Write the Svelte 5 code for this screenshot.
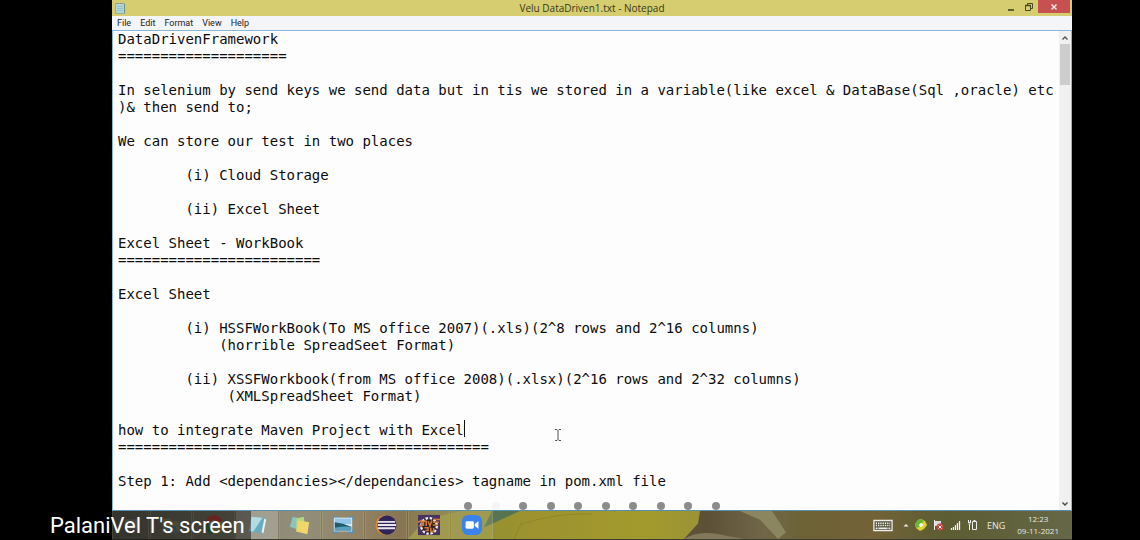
<script>
  const lines = [
    'DataDrivenFramework',
    '='.repeat(20),
    '',
    'In selenium by send keys we send data but in tis we stored in a variable(like excel & DataBase(Sql ,oracle) etc',
    ')& then send to;',
    '',
    'We can store our test in two places',
    '',
    '        (i) Cloud Storage',
    '',
    '        (ii) Excel Sheet',
    '',
    'Excel Sheet - WorkBook',
    '='.repeat(24),
    '',
    'Excel Sheet',
    '',
    '        (i) HSSFWorkBook(To MS office 2007)(.xls)(2^8 rows and 2^16 columns)',
    '            (horrible SpreadSeet Format)',
    '',
    '        (ii) XSSFWorkbook(from MS office 2008)(.xlsx)(2^16 rows and 2^32 columns)',
    '             (XMLSpreadSheet Format)',
    '',
    'how to integrate Maven Project with Excel',
    '='.repeat(44),
    '',
    'Step 1: Add <dependancies></dependancies> tagname in pom.xml file'
  ];
  let text = $state(lines.join('\n'));
  const menus = ['File', 'Edit', 'Format', 'View', 'Help'];
  const dots = Array.from({ length: 10 }, (_, i) => i);
</script>

<main class="share">
  <div class="desktop">
    <header class="titlebar">
      <svg class="app-icon" viewBox="0 0 12 12" aria-hidden="true">
        <path d="M1.500 1.500h9v10h-9z" fill="#b4d6d4" stroke="#93b09a" />
        <path d="M3 4.500h6M3 6.500h6M3 8.500h6" stroke="#8fc3d0" />
        <path d="M2 1.500h8" stroke="#81937b" stroke-dasharray="1 1" />
        <path d="M10.500 2v9" stroke="#6f8f80" />
      </svg>
      <h1>Velu DataDriven1.txt - Notepad</h1>
      <div class="controls">
        <button aria-label="Minimize"><svg viewBox="0 0 10 10"><path d="M2 8h6" stroke="#393818" stroke-width="1.500" /></svg></button>
        <button aria-label="Restore"><svg viewBox="0 0 10 10"><path d="M3.500 3V1.500h5v5H7" fill="none" stroke="#4a4821" /><path d="M1.500 3.500h5v5h-5z" fill="none" stroke="#4a4821" /><path d="M1 3.500h6" stroke="#4a4821" stroke-width="1.500" /></svg></button>
        <button class="close" aria-label="Close"><svg viewBox="0 0 10 10"><path d="M2.500 2.500l5 5m0-5l-5 5" stroke="#f6e6e4" stroke-width="1.500" /></svg></button>
      </div>
    </header>

    <nav class="menubar" aria-label="Menu">
      {#each menus as m}<button>{m}</button>{/each}
    </nav>

    <section class="editor">
      <textarea aria-label="Document text" spellcheck="false" wrap="off" rows="28" bind:value={text}></textarea>
      <div class="scrollbar">
        <button aria-label="Scroll up"><svg viewBox="0 0 8 8"><path d="M1.500 5.500L4 3l2.500 2.500" fill="none" stroke="#555" stroke-width="1.400" /></svg></button>
        <div class="thumb"></div>
        <button class="down" aria-label="Scroll down"><svg viewBox="0 0 8 8"><path d="M1.500 2.500L4 5l2.500-2.500" fill="none" stroke="#444" stroke-width="1.400" /></svg></button>
      </div>
      <span class="caret"></span>
      <svg class="ibeam" viewBox="0 0 8 12" aria-hidden="true"><path d="M1 .5h2l1 1 1-1h2M4 1.500v9M1 11.500h2l1-1 1 1h2" fill="none" stroke="#555" /></svg>
      <div class="pager">
        {#each dots as d}<span class:current={d === 1}></span>{/each}
      </div>
    </section>

    <footer class="taskbar">
      <svg class="wallpaper" viewBox="0 0 960 29" preserveAspectRatio="none" aria-hidden="true">
        <defs>
          <linearGradient id="base">
            <stop offset="0" stop-color="#5d5c50" /><stop offset=".14" stop-color="#7c7a68" />
            <stop offset=".2" stop-color="#85806a" /><stop offset=".26" stop-color="#857452" />
            <stop offset=".3" stop-color="#7a643c" /><stop offset=".37" stop-color="#8a8446" />
            <stop offset=".4" stop-color="#5f6840" /><stop offset=".62" stop-color="#5d5038" />
            <stop offset=".68" stop-color="#716748" /><stop offset=".72" stop-color="#6c6236" />
            <stop offset=".79" stop-color="#746238" /><stop offset=".87" stop-color="#5c5d33" />
            <stop offset="1" stop-color="#656747" />
          </linearGradient>
          <linearGradient id="petal">
            <stop offset="0" stop-color="#929033" /><stop offset=".25" stop-color="#9d922f" />
            <stop offset=".75" stop-color="#a39a2d" /><stop offset="1" stop-color="#9b9336" />
          </linearGradient>
        </defs>
        <path d="M0 0h960v29H0z" fill="url(#base)" />
        <path d="M296 29L314 8 350 0h38l20 0-30 29z" fill="#958d3b" />
        <path d="M380 0h28l-20 12-16 5z" fill="#55744f" />
        <path d="M362 29l12-13 34-16h180l-2 13-14 16z" fill="url(#petal)" />
        <path d="M408 14q34-12 72-11M402 29l8-18" fill="none" stroke="#8e8729" />
        <path d="M628 0h32l14 22-8 7-18-20z" fill="#8b8660" />
        <path d="M572 29q14-10 40-4l20 4z" fill="#817959" />
      </svg>
      <div class="apps">
        <button class="start" aria-label="Desktop"><svg viewBox="0 0 26 24"><path d="M6 6h14v11H6z" fill="#817e78" /></svg></button>
        <button aria-label="File Explorer"><svg viewBox="0 0 26 24"><path d="M4 5h8l2 3h8v12H4z" fill="#8c815a" /><path d="M7 13h12v8H7z" fill="#53798b" /></svg></button>
        <button aria-label="Chrome"><svg viewBox="0 0 26 24"><path d="M13 12L4 7a10 10 0 0 1 18 0z" fill="#b8413a" /><path d="M13 12L4 7a10 10 0 0 0 8 15z" fill="#367447" /><path d="M13 12l9-5a10 10 0 0 1-10 15z" fill="#9e8a3d" /><circle cx="13" cy="12" r="4.500" fill="#4575a3" stroke="#aaa" /></svg></button>
        <button class="open active" aria-label="Notepad"><svg viewBox="0 0 26 24"><path d="M7 3l15 1-3 17-15-2z" fill="#68acc1" /><path d="M7 3l12 1-10 15-5 0z" fill="#b4dbe2" /><path d="M21 5l2 1-3 15-2-1z" fill="#edf2ea" /></svg></button>
        <button class="open" aria-label="Sticky Notes"><svg viewBox="0 0 26 24"><path d="M5 3l8 2-3 12-8-3z" fill="#8cc3c0" /><path d="M9 5l8-2 2 14-10 2z" fill="#b5d97f" /><path d="M11 7l12 2-2 13-12-3z" fill="#f0d76c" /></svg></button>
        <button class="open" aria-label="Photos"><svg viewBox="0 0 26 24"><path d="M2 3h6v3H2zM18 3h6v3h-6zM2 17h6v4H2zM18 17h6v4h-6z" fill="#4f90ba" /><path d="M3 4h20v15H3z" fill="#d9edf4" /><path d="M4 5h18v6H4z" fill="#93c6e6" /><path d="M4 9q9 1 18 5v4H4z" fill="#235a6c" /><path d="M4 15q9-2 18-1v4H4z" fill="#58a0bd" /></svg></button>
        <button class="open" aria-label="Eclipse"><svg viewBox="0 0 26 24"><circle cx="12" cy="12" r="10.500" fill="#e08a2c" /><circle cx="14" cy="12" r="10.500" fill="#30245a" /><path d="M4 8.500h19M4 12h20M4 15.500h19" stroke="#e8e5ee" stroke-width="2" /></svg></button>
        <button class="open" aria-label="Java IDE"><svg viewBox="0 0 26 24"><path d="M1 1h24v22H1z" fill="#493460" /><circle cx="13" cy="13" r="8.500" fill="#2c1f20" stroke="#eee" stroke-width="2.500" stroke-dasharray="2.700 1.800" /><path d="M1 9l4-2v6H2M7 13V8h3v5M12 8l2 5 2-6M18 6h7M17 9h7M17 12h6M8 15h4v3H9M15 15v4h3v-4" fill="none" stroke="#d0793b" stroke-width="1.700" /></svg></button>
        <button class="open" aria-label="Zoom"><svg viewBox="0 0 26 24"><rect x="2" y="1" width="22" height="22" rx="7" fill="#3b83eb" /><rect x="6" y="8" width="9" height="8" rx="1.500" fill="#fff" /><path d="M16 11l4-3v8l-4-3z" fill="#fff" /></svg></button>
      </div>
      <div class="tray">
        <button class="keyboard" aria-label="Touch keyboard"><svg width="20" height="13" viewBox="0 0 22 14"><path d="M1 1.500h20v11H1z" fill="#555337" stroke="#eee" stroke-width="1.400" /><path d="M3 4.500h16M3 7h16" stroke="#eee" stroke-width="1.500" stroke-dasharray="1.500 1" /><path d="M3 10h2m1 0h10m1 0h2" stroke="#eee" stroke-width="1.500" /></svg></button>
        <button aria-label="Show hidden icons"><svg width="6" height="6" viewBox="0 0 6 6"><path d="M.5 4.500L3 2l2.500 2.500z" fill="#eee" /></svg></button>
        <button aria-label="Updater"><svg width="12" height="12" viewBox="0 0 12 12"><path d="M6 0l4 2 2 4-3 4-4 2-4-3-1-4 3-4z" fill="#dcd32c" /><path d="M0 5l3-4 3-1 3 2-3 3-2 3-3 1z" fill="#69b53a" /><path d="M4 6h4M6 4v4" stroke="#fff" stroke-width="1.600" /></svg></button>
        <button aria-label="Action Center"><svg width="11" height="12" viewBox="0 0 11 12"><path d="M1.500 1v10" stroke="#eee" /><path d="M2 2h6v5H2z" fill="#ddd" /><circle cx="7" cy="8" r="3.500" fill="#c54440" /><path d="M5.500 6.500l3 3m0-3l-3 3" stroke="#fff" /></svg></button>
        <button aria-label="Network"><svg width="11" height="12" viewBox="0 0 11 12"><path d="M1.500 9v2M3.500 8v3M5.500 6v5M7.500 4v7M9.500 2v9" stroke="#eee" stroke-width="1.300" /></svg></button>
        <button aria-label="Battery"><svg width="11" height="12" viewBox="0 0 11 12"><path d="M5.500 2.500h4v8h-4zM6.500 1.500h2M2.500 5v6M1 3.500h3M1.500 1v2M3.500 1v2M1.500 5h2" fill="none" stroke="#eee" /></svg></button>
        <span class="lang">ENG</span>
        <div class="clock"><time>12:23</time><span>09-11-2021</span></div>
      </div>
    </footer>
  </div>
  <div class="caption">PalaniVel T's screen</div>
</main>

<style>
  :global(body) { margin: 0; background: #000; }
  .share { position: relative; min-height: 100vh; display: flex; box-sizing: border-box; padding: 0 68px 0 112px; background: #000; }
  .desktop { flex: 1; min-width: 0; display: flex; flex-direction: column; background: #fff; font-family: "Open Sans", "Noto Sans", sans-serif; }
  button { border: 0; padding: 0; margin: 0; background: none; font: inherit; color: inherit; display: flex; align-items: center; justify-content: center; }
  .titlebar { height: 16px; display: grid; grid-template-columns: 1fr auto 1fr; align-items: center; background: #d6cd70; color: #3a3818; }
  .app-icon { width: 12px; height: 12px; margin-left: 2px; }
  h1 { margin: 0; font-size: 10px; line-height: 16px; font-weight: 400; }
  .controls { display: flex; justify-content: flex-end; align-self: start; margin-right: 2px; }
  .controls button { width: 18px; height: 13px; }
  .controls svg { width: 10px; height: 10px; }
  .controls .close { width: 32px; background: #c75050; }
  .menubar { height: 14px; display: flex; gap: 9px; padding-left: 5px; background: #f4f5f8; font: 9px/14px Roboto, sans-serif; color: #222; }
  .editor { position: relative; flex: 1; display: flex; border: 1px solid #8ab7d6; border-bottom-color: #5590ac; background: #fefdfe; }
  textarea { flex: 1; min-width: 0; min-height: 0; box-sizing: border-box; border: 0; outline: 0; margin: 0; padding: 0 0 0 5px; resize: none; overflow: hidden; background: transparent; color: #0c0c0c; font: 14px/17px "DejaVu Sans Mono", monospace; white-space: pre; }
  .scrollbar { width: 12px; display: flex; flex-direction: column; background: #f0f0f1; }
  .scrollbar button { height: 13px; }
  .scrollbar svg { width: 8px; height: 8px; }
  .thumb { height: 41px; margin: 0 1px; background: #cdcdce; }
  .down { margin-top: auto; }
  .caret { position: absolute; left: 351px; top: 389px; width: 1px; height: 17px; background: #111; }
  .ibeam { position: absolute; left: 441px; top: 398px; width: 8px; height: 12px; }
  .pager { position: absolute; left: 0; right: 0; bottom: 0; width: 256px; margin: 0 auto; display: flex; justify-content: space-between; }
  .pager span { width: 8px; height: 8px; border-radius: 50%; background: #8d8c8d; }
  .pager .current { background: #f6f4f6; }
  .taskbar { position: relative; height: 29px; display: flex; justify-content: space-between; border-bottom: 1px solid #3c3c32; box-sizing: border-box; color: #e9e9e0; }
  .wallpaper { position: absolute; inset: 0; width: 100%; height: 100%; }
  .apps, .tray { position: relative; display: flex; align-items: center; }
  .apps { align-items: stretch; gap: 1px; }
  .apps button { width: 42px; border-right: 1px solid #aaa58066; border-left: 1px solid #aaa58066; box-sizing: border-box; }
  .apps .start { width: 37px; }
  .apps svg { width: 24px; height: 22px; }
  .apps .open { background: #ffffff1c; }
  .apps .active { background: #ffffff44; }
  .tray { gap: 6px; padding-right: 13px; font-size: 9px; }
  .keyboard { margin-right: 4px; }
  .lang { margin: 0 6px 0 3px; }
  .clock { display: flex; flex-direction: column; align-items: center; font-size: 8px; line-height: 12px; }
  .caption { position: absolute; left: 0; bottom: 0; height: 29px; box-sizing: border-box; padding: 1px 6px 0 50px; background: #00000070; color: #fff; font: 22px/28px Roboto, sans-serif; white-space: nowrap; }
</style>
